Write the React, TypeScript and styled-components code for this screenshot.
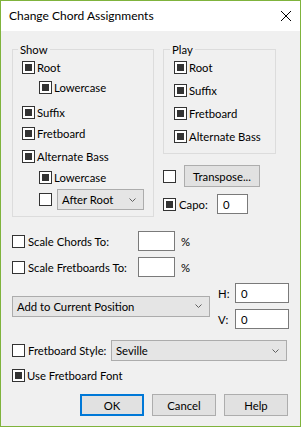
import React from 'react'
import styled, { createGlobalStyle } from 'styled-components'

const GlobalStyle = createGlobalStyle`
  html, body {
    margin: 0;
    padding: 0;
    background: #ffffff;
  }
  body {
    font-family: Lato, "Liberation Sans", sans-serif;
    font-size: 11.3px;
    color: #000;
  }
`

const Chevron: React.FC = () => (
  <svg width="7" height="4" viewBox="0 0 7 4">
    <path d="M0.5 0.5 L3.5 3.5 L6.5 0.5" fill="none" stroke="#606060" strokeWidth="1" />
  </svg>
)

const Check: React.FC<{ on?: boolean; text?: string; gap?: number }> = ({ on, text, gap }) => (
  <>
    <Box $on={on} />
    {text && <Label $gap={gap}>{text}</Label>}
  </>
)

const Select: React.FC<{ text: string; w: number; h?: number; ml?: number }> = ({ text, w, h, ml }) => (
  <DropDown $w={w} $h={h} $ml={ml}>
    <span>{text}</span>
    <Chevron />
  </DropDown>
)

const App: React.FC = () => {
  return (
    <>
      <GlobalStyle />
      <Window>
        <TitleBar>
          <Title>Change Chord Assignments</Title>
          <svg width="10" height="10" viewBox="0 0 10 10">
            <path d="M0 0 L10 10 M10 0 L0 10" stroke="#000" strokeWidth="1" />
          </svg>
        </TitleBar>
        <Body>
          <TopSection>
            <Group $w={142} $pl={9} $pb={6}>
              <Legend>Show</Legend>
              <Row>
                <Check on text="Root" />
              </Row>
              <Row $mt={7} $indent={17}>
                <Check on text="Lowercase" />
              </Row>
              <Row $mt={12}>
                <Check on text="Suffix" />
              </Row>
              <Row $mt={8}>
                <Check on text="Fretboard" />
              </Row>
              <Row $mt={10}>
                <Check on text="Alternate Bass" />
              </Row>
              <Row $mt={8} $indent={17}>
                <Check on text="Lowercase" />
              </Row>
              <Row $mt={5} $indent={17} $h={21}>
                <Check />
                <Select text="After Root" w={87} ml={5} />
              </Row>
            </Group>
            <RightColumn>
              <Group $w={113} $pl={10} $pb={10}>
                <Legend>Play</Legend>
                <Row>
                  <Check on text="Root" />
                </Row>
                <Row $mt={10}>
                  <Check on text="Suffix" />
                </Row>
                <Row $mt={10}>
                  <Check on text="Fretboard" />
                </Row>
                <Row $mt={10}>
                  <Check on text="Alternate Bass" />
                </Row>
              </Group>
              <Row $mt={11} $h={22}>
                <Check />
                <Button $w={76} $ml={8}>Transpose...</Button>
              </Row>
              <Row $mt={7} $h={20}>
                <Check on />
                <FixedLabel $w={41} $gap={3}>Capo:</FixedLabel>
                <TextInput $w={31}>0</TextInput>
              </Row>
            </RightColumn>
          </TopSection>

          <Row $mt={14} $h={20}>
            <Check />
            <FixedLabel $w={113}>Scale Chords To:</FixedLabel>
            <TextInput $w={37} />
            <Percent>%</Percent>
          </Row>
          <Row $mt={6} $h={20}>
            <Check />
            <FixedLabel $w={113}>Scale Fretboards To:</FixedLabel>
            <TextInput $w={37} />
            <Percent>%</Percent>
          </Row>

          <PositionRow>
            <Select text="Add to Current Position" w={198} />
            <OffsetGrid>
              <span>H:</span>
              <TextInput $w={54}>0</TextInput>
              <span>V:</span>
              <TextInput $w={54}>0</TextInput>
            </OffsetGrid>
          </PositionRow>

          <Row $mt={11} $h={21}>
            <Check />
            <FixedLabel $w={86}>Fretboard Style:</FixedLabel>
            <Select text="Seville" w={176} />
          </Row>
          <Row $mt={8}>
            <Check on text="Use Fretboard Font" />
          </Row>

          <ButtonBar>
            <Button $w={64} $primary>OK</Button>
            <Button $w={64}>Cancel</Button>
            <Button $w={64}>Help</Button>
          </ButtonBar>
        </Body>
      </Window>
    </>
  )
}

const Window = styled.div`
  width: 301px;
  height: 427px;
  box-sizing: border-box;
  border: 1px solid #7fb33c;
  background: #f0f0f0;
  display: flex;
  flex-direction: column;
`

const TitleBar = styled.div`
  height: 30px;
  flex: none;
  background: #ffffff;
  display: flex;
  align-items: center;
  justify-content: space-between;
  padding: 0 9px 0 8px;
`

const Title = styled.span`
  font-size: 12px;
  line-height: 16px;
`

const Body = styled.div`
  padding: 11px 10px 0 11px;
  display: flex;
  flex-direction: column;
`

const TopSection = styled.div`
  display: flex;
  align-items: flex-start;
  gap: 9px;
`

const RightColumn = styled.div`
  display: flex;
  flex-direction: column;
  width: 113px;
`

const Group = styled.fieldset<{ $w: number; $pl: number; $pb: number }>`
  box-sizing: border-box;
  width: ${p => p.$w}px;
  margin: 0;
  min-width: 0;
  border: 1px solid #dcdcdc;
  padding: 4px 0 ${p => p.$pb}px ${p => p.$pl}px;
  display: flex;
  flex-direction: column;
`

const Legend = styled.legend`
  padding: 0 2px;
  margin-left: -4px;
  line-height: 15px;
`

const Row = styled.div<{ $mt?: number; $indent?: number; $h?: number }>`
  display: flex;
  align-items: center;
  height: ${p => p.$h ?? 13}px;
  margin-top: ${p => p.$mt ?? 0}px;
  margin-left: ${p => p.$indent ?? 0}px;
`

const Box = styled.span<{ $on?: boolean }>`
  width: 13px;
  height: 13px;
  flex: none;
  box-sizing: border-box;
  border: 1px solid #333333;
  background: #ffffff;
  display: flex;
  align-items: center;
  justify-content: center;
  &::after {
    content: '';
    width: 7px;
    height: 7px;
    background: ${p => (p.$on ? '#333333' : 'transparent')};
  }
`

const Label = styled.span<{ $gap?: number }>`
  margin-left: ${p => p.$gap ?? 2}px;
  line-height: 13px;
  white-space: nowrap;
`

const FixedLabel = styled.span<{ $w: number; $gap?: number }>`
  width: ${p => p.$w}px;
  flex: none;
  box-sizing: border-box;
  padding-left: ${p => p.$gap ?? 3}px;
  white-space: nowrap;
`

const DropDown = styled.div<{ $w: number; $h?: number; $ml?: number }>`
  box-sizing: border-box;
  width: ${p => p.$w}px;
  height: ${p => p.$h ?? 21}px;
  margin-left: ${p => p.$ml ?? 0}px;
  flex: none;
  border: 1px solid #acacac;
  background: #e5e5e5;
  display: flex;
  align-items: center;
  justify-content: space-between;
  padding: 0 7px 0 4px;
  white-space: nowrap;
`

const TextInput = styled.div<{ $w: number }>`
  box-sizing: border-box;
  width: ${p => p.$w}px;
  height: 20px;
  flex: none;
  border: 1px solid #7a7a7a;
  background: #ffffff;
  display: flex;
  align-items: center;
  padding-left: 5px;
`

const Percent = styled.span`
  margin-left: 6px;
`

const PositionRow = styled.div`
  display: flex;
  align-items: center;
  margin-top: 6px;
`

const OffsetGrid = styled.div`
  display: grid;
  grid-template-columns: 17px 54px;
  row-gap: 6px;
  align-items: center;
  margin-left: 8px;
`

const Button = styled.div<{ $w: number; $ml?: number; $primary?: boolean }>`
  box-sizing: border-box;
  width: ${p => p.$w}px;
  height: 22px;
  margin-left: ${p => p.$ml ?? 0}px;
  flex: none;
  background: #e1e1e1;
  border: ${p => (p.$primary ? '2px solid #0078d7' : '1px solid #adadad')};
  display: flex;
  align-items: center;
  justify-content: center;
  white-space: nowrap;
`

const ButtonBar = styled.div`
  display: flex;
  justify-content: flex-end;
  gap: 8px;
  margin-top: 12px;
  padding-right: 2px;
`

export default App
